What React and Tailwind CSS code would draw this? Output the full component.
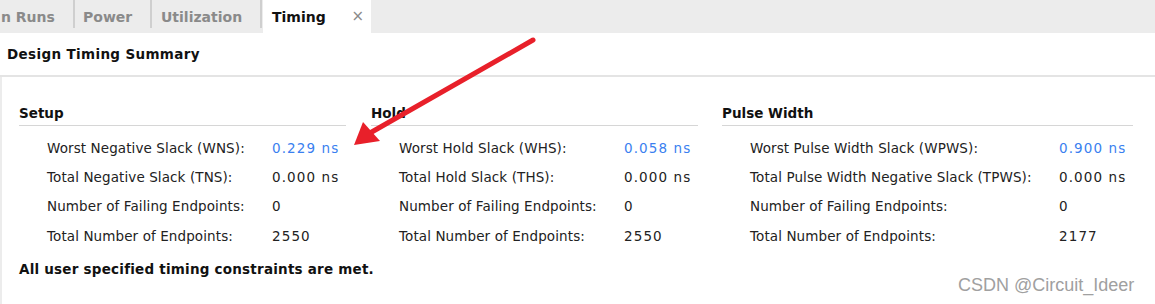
import React from "react";

const columns = [
  {
    title: "Setup",
    width: "w-[352px]",
    line: "w-[327px]",
    valueCol: "w-[225px]",
    rows: [
      ["Worst Negative Slack (WNS):", "0.229 ns", true],
      ["Total Negative Slack (TNS):", "0.000 ns"],
      ["Number of Failing Endpoints:", "0"],
      ["Total Number of Endpoints:", "2550"],
    ],
  },
  {
    title: "Hold",
    width: "w-[351px]",
    line: "w-[327px]",
    valueCol: "w-[225px]",
    rows: [
      ["Worst Hold Slack (WHS):", "0.058 ns", true],
      ["Total Hold Slack (THS):", "0.000 ns"],
      ["Number of Failing Endpoints:", "0"],
      ["Total Number of Endpoints:", "2550"],
    ],
  },
  {
    title: "Pulse Width",
    width: "w-[411px]",
    line: "w-[411px]",
    valueCol: "w-[309px]",
    rows: [
      ["Worst Pulse Width Slack (WPWS):", "0.900 ns", true],
      ["Total Pulse Width Negative Slack (TPWS):", "0.000 ns"],
      ["Number of Failing Endpoints:", "0"],
      ["Total Number of Endpoints:", "2177"],
    ],
  },
];

const Tab = ({ label, w, pl, active, children }) => (
  <div
    className={`flex items-center h-full ${w} ${pl} ${
      active ? "bg-white text-[#111] font-bold" : "text-[#8a8a8a] font-bold"
    }`}
  >
    <span className="text-[14px] leading-none">{label}</span>
    {children}
  </div>
);

const Sep = () => <div className="w-[2px] h-[28px] bg-[#cfcfcf] self-start" />;

export default function App() {
  return (
    <div
      className="relative w-[1155px] h-[304px] bg-white overflow-hidden text-[#222]"
      style={{ fontFamily: '"DejaVu Sans", sans-serif' }}
    >
      {/* tab strip */}
      <div className="flex h-[33px] bg-[#ececec]">
        <Tab label="n Runs" w="w-[73px]" pl="pl-[1px]" />
        <Sep />
        <Tab label="Power" w="w-[75px]" pl="pl-[8px]" />
        <Sep />
        <Tab label="Utilization" w="w-[108px]" pl="pl-[9px]" />
        <Sep />
        <div className="w-[1px]" />
        <Tab label="Timing" w="w-[108px]" pl="pl-[9px]" active>
          <span className="ml-auto mr-[7px] text-[#8a8a8a] font-normal text-[15px] leading-none">
            ×
          </span>
        </Tab>
      </div>

      {/* title */}
      <div className="h-[42px] flex items-center pl-[7px]">
        <span className="text-[13.5px] font-bold tracking-[0.35px] text-[#111]">Design Timing Summary</span>
      </div>
      <div className="h-[2px] bg-[#e4e4e4]" />

      {/* body */}
      <div className="border-l-2 border-[#ececec] h-[227px] pl-[17px]">
        <div className="flex pt-[26px]">
          {columns.map((col) => (
            <div key={col.title} className={col.width}>
              <div className="h-[20px] leading-[20px] text-[13.5px] font-bold text-[#111]">
                {col.title}
              </div>
              <div className={`h-[1px] mt-[2px] bg-[#d6d6d6] ${col.line}`} />
              <div className="mt-[7px] pl-[28px]">
                {col.rows.map(([label, value, blue]) => (
                  <div key={label} className="flex h-[29.4px] items-center text-[13.5px]">
                    <span className={`${col.valueCol} shrink-0 tracking-[0.1px]`}>{label}</span>
                    <span className={`tracking-[1.1px] ${blue ? "text-[#3a7ff0]" : ""}`}>{value}</span>
                  </div>
                ))}
              </div>
            </div>
          ))}
        </div>
        <div className="mt-[8px] h-[20px] leading-[20px] text-[13.5px] font-bold tracking-[0.22px] text-[#111]">
          All user specified timing constraints are met.
        </div>
      </div>

      {/* watermark */}
      <div
        className="absolute left-[958px] top-[273px] text-[18px] leading-[24px] text-[#a0a0a0]"
        style={{ fontFamily: '"Liberation Sans", Arial, sans-serif' }}
      >
        CSDN @Circuit_Ideer
      </div>

      {/* red annotation arrow */}
      <svg className="absolute inset-0 pointer-events-none" width="1155" height="304">
        <line x1="533" y1="40" x2="370" y2="133" stroke="#e8202a" strokeWidth="5" strokeLinecap="round" />
        <polygon points="354,145 363,122 380,141" fill="#e8202a" />
      </svg>
    </div>
  );
}
